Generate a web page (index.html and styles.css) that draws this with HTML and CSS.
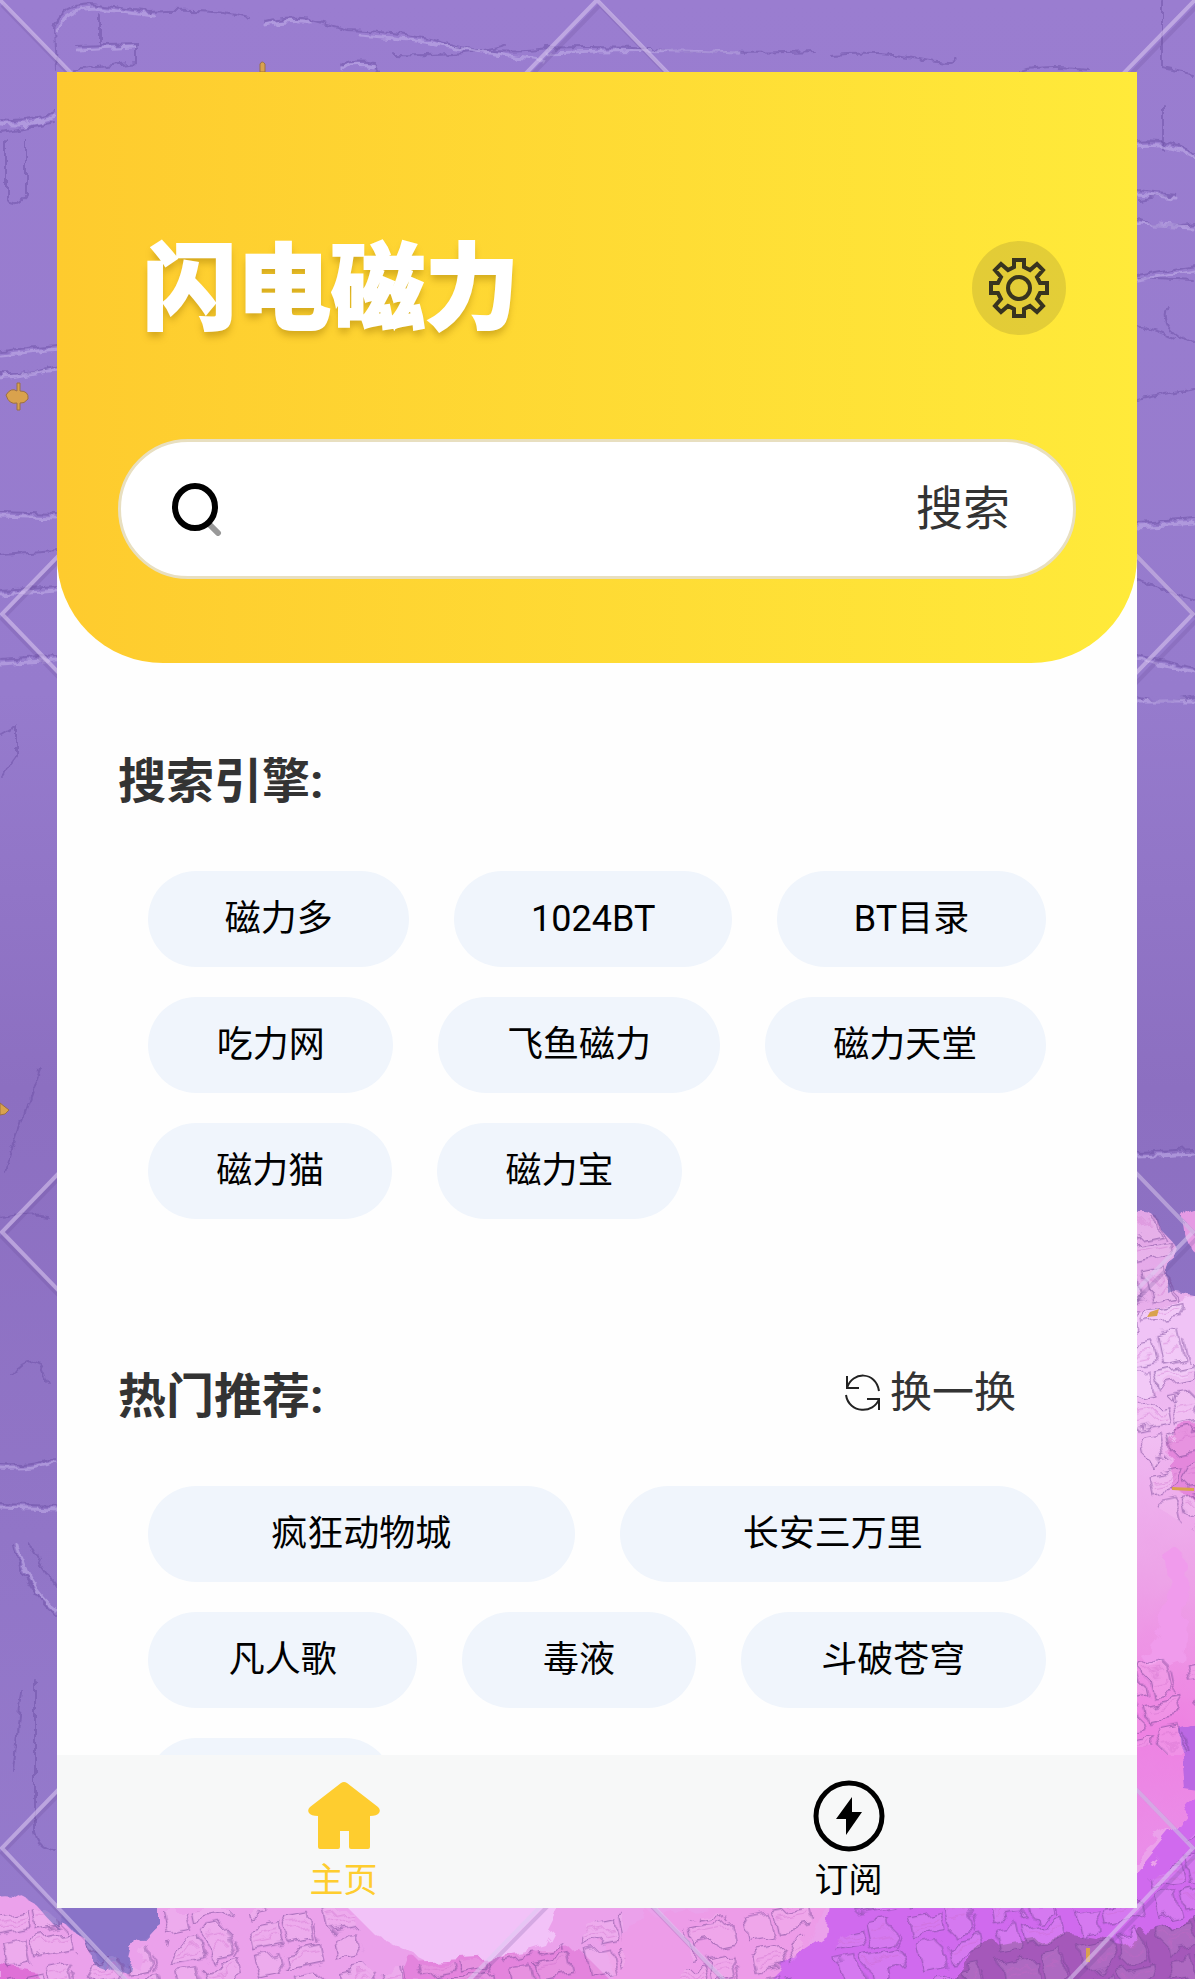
FILE: index.html
```html
<!DOCTYPE html>
<html lang="zh-CN">
<head>
    <meta charset="UTF-8">
    <meta name="viewport" content="width=device-width, initial-scale=1">
    <title>闪电磁力</title>
    <link rel="stylesheet" href="styles.css">
</head>
<body>
<svg class="wall" viewBox="0 0 1195 1979" preserveAspectRatio="none" aria-hidden="true">
    <defs>
        <linearGradient id="base" x1="0" y1="0" x2="0" y2="1">
            <stop offset="0" stop-color="#9a7dd0"/>
            <stop offset=".35" stop-color="#967bcd"/>
            <stop offset=".55" stop-color="#8c6fc1"/>
            <stop offset="1" stop-color="#967bcd"/>
        </linearGradient>
        <linearGradient id="side" x1="0" y1="0" x2="0" y2="1">
            <stop offset="0" stop-color="#e2a5e6"/>
            <stop offset=".25" stop-color="#efb9f2"/>
            <stop offset=".45" stop-color="#eda4e8"/>
            <stop offset=".65" stop-color="#ee82e2"/>
            <stop offset=".8" stop-color="#ea8de8"/>
            <stop offset="1" stop-color="#cf6bee"/>
        </linearGradient>
        <pattern id="dabs" width="58" height="46" patternUnits="userSpaceOnUse" patternTransform="rotate(-12) scale(1.4)">
            <path d="M2 4h24v14h-24zM30 1h16v20h-16zM48 8v16M4 24h15v18h-15zM23 26h28v12h-28z" fill="#fff" fill-opacity=".1" stroke="#6f3f91" stroke-opacity=".5" stroke-width="1"/>
            <path d="M4 9h20M4 13h20M25 30h24M32 6h12M32 12h12" stroke="#c866c4" stroke-opacity=".35" stroke-width="1"/>
        </pattern>
        <filter id="rough" x="-5%" y="-5%" width="110%" height="110%">
            <feTurbulence type="fractalNoise" baseFrequency=".035" numOctaves="3" seed="4" result="n"/>
            <feDisplacementMap in="SourceGraphic" in2="n" scale="26"/>
        </filter>
        <filter id="ripple" x="-5%" y="-5%" width="110%" height="110%">
            <feTurbulence type="fractalNoise" baseFrequency=".08" numOctaves="3" seed="9" result="n"/>
            <feDisplacementMap in="SourceGraphic" in2="n" scale="9" xChannelSelector="R" yChannelSelector="G"/>
        </filter>
    </defs>
    <rect width="1195" height="1979" fill="url(#base)"/>
    <!-- brush ridges -->
    <g fill="none" stroke-linecap="round" filter="url(#ripple)">
        <g stroke="#6b4fa5" stroke-opacity=".5" stroke-width="2">
            <path d="M56 72L54 28Q58 6 90 4L150 12Q210 8 250 18M266 22q20-6 46-2l36 10q60 2 100 14t100 5M395 55q70 2 110-10M545 48q60 -3 120 2t150 1M830 55q50-4 90 4t35 0M1162 0v68l30 6M1163 105v46M76 46l60-2v18l-62 8M100 15v30M340 66q10-7 35-3l4 8M1020 72q25-7 68-2"/>
            <path d="M0 120q28 4 56-8M0 132l56-10M0 351l57-6M0 374q30 2 57-8M0 512l57 2M0 555l57-4M0 590l57-4M0 660q25-2 57-4M6 140v60q10 8 20-4v-55M2 735l14-8v30l-14 20"/>
            <path d="M1137 142q30-4 58 12M1137 190l38 4-36 6M1137 220q25 10 58 3M1137 275l58-10M1137 278l58 3M1168 306q-10 22 24 38M1137 326q20 5 38 13M1137 523l58-4M1137 580l58 20M1137 655l58 13M1137 697q30 8 58 0M1137 400l58-12"/>
            <path d="M0 1465q35 2 57-8M0 1504l57 2M14 1545q8 40 42 70M28 1542l28 45M12 1375q15-20 29-10l7 18M35 1680v150q2 20 22 20M22 1690l-9 80M40 1070q-20 55-35 100M0 1218q30-6 50-2M1137 1152l58-3"/>
        </g>
        <g stroke="#c0abe7" stroke-opacity=".6" stroke-width="3">
            <path d="M58 31q4-21 35-23l60 8M266 25q22-6 44-2M360 35q50 4 80 10t102 15M548 53q95-5 190 0M78 50l56-3M340 69q10-7 35-3M0 124q28 4 56-8M0 355l57-6M0 378l57-8M0 516l57 2M0 594l57-4M0 664l57-4"/>
            <path d="M1137 146q30-4 58 12M1137 194l38 4M1137 224l58 3M1137 280l58-10M1137 527l58-4M1137 659l58 13M1137 701l58 0M0 1469q35 2 57-8M0 1508l57 2M18 1545q8 40 38 65M1137 1156l58-3"/>
        </g>
    </g>
    <!-- pink paint -->
    <g filter="url(#rough)">
        <path d="M1125 1220q30-18 36 10 20 18 9 45l-6 14 45 8v710H1060V1780h65z" fill="url(#side)"/>
        <path d="M1184 1225q6-20 30-12v50q-26-5-30-38" fill="#e59ae4"/>
        <path d="M1137 1310l70-20v70l-85 50z" fill="#f0c3f6"/>
        <path d="M1170 1440q12-20 40-15v80l-38-15z" fill="#e487dc"/>
        <path d="M1165 1560q28-25 20 30l-5 70-28 10-12-15q35-20 25-95" fill="#f09bec"/>
        <path d="M1180 1730l40-15v80l-35-5z" fill="#bb67e3"/>
        <path d="M-20 1898q28-12 55 6l22 24 20-10 15 44 38 14 8-34 20-22V1895H1100L1215 1790V2000H-20z" fill="#eba1eb"/>
        <path d="M335 1895h235l-25 50q-60 20-120 15l-50-25z" fill="#f2c2f8"/>
        <path d="M600 1940l70-30 155-10-30 80-180 10z" fill="#ed9ce8"/>
        <path d="M400 1985l10-25 170-10 40 40z" fill="#e484dd"/>
        <path d="M0 1965l35 6 10 20H0z" fill="#df70d7"/>
        <path d="M830 1895h290l90-110v205H760l35-35 30-20z" fill="#d06aee"/>
        <path d="M940 1990l40-42 80-15 60 10 80-22v75z" fill="#a558ba"/>
        <path d="M58 1898h100v24l-18 13-9 32h-30l-14-28-25-16z" fill="#8973c8"/>
    </g>
    <g filter="url(#rough)" fill="url(#dabs)">
        <path d="M1125 1225l40-8 10 78h40v250l-90-60z"/>
        <path d="M1125 1660h90v90h-90z"/>
        <path d="M-10 1910h55l50 40 45 20 20-60h190l20 60 190-20 60-50v100H-10z"/>
        <path d="M690 1920l130-20-40 100h-100z"/>
        <path d="M860 1905h260l100-90v190H820z"/>
    </g>
    <!-- gold flecks -->
    <g fill="#d9a24d" stroke="#9c7045" stroke-width="1">
        <path d="M260 72v-8q2-4 5 0v8zM6 395q5-8 11-4v-8h3v8q9 0 8 8-4 5-8 4v7h-3v-7q-8 2-11-8zM0 1103l9 7-4 4-5 1z"/>
        <path d="M1150 1312l9-3-2 7-10 1zM1172 1487l22 1v3l-22-1zM1086 1948h4v14h-4z" stroke="none"/>
    </g>
    <!-- diamond lattice -->
    <g fill="none" stroke-width="4">
        <path d="M2 5L600 619 1198 5M600 5L2 619 600 1237 1198 619zM2 1237L600 1853 1198 1237 600 619zM600 1237L2 1853 130 1985M600 1237L1198 1853 1070 1985M470 1985L600 1853 728 1985" stroke="#62478f" stroke-opacity=".2"/>
        <path d="M0 0L597 614 1195 0M597 0L2 614 597 1232 1193 614zM2 1232L597 1848 1193 1232 597 614zM597 1232L2 1848 127 1981M597 1232L1193 1848 1068 1981M468 1981L597 1848 725 1981" stroke="#dccbf1" stroke-opacity=".55"/>
    </g>
</svg>

<div class="app">
    <header class="top">
        <div class="bar">
            <h1 class="logo">闪电磁力</h1>
            <button class="setting" type="button" aria-label="设置">
                <svg viewBox="0 0 60 60" aria-hidden="true">
                    <path d="M25 2h10v7l6 3 7-6 6 6-6 7 3 6h7v10h-7l-3 6 6 7-6 6-7-6-6 3v7H25v-7l-6-3-7 6-6-6 6-7-3-6H2V25h7l3-6-6-7 6-6 7 6 6-3z"/>
                    <circle cx="30" cy="30" r="11"/>
                </svg>
            </button>
        </div>
        <form class="search">
            <svg class="glass" viewBox="0 0 52 54" aria-hidden="true">
                <path d="M38 42l9 9" stroke="#999" stroke-width="6" stroke-linecap="round"/>
                <ellipse cx="24" cy="25" rx="20" ry="21" fill="none" stroke="#000" stroke-width="6"/>
            </svg>
            <input class="word" type="text" aria-label="搜索内容">
            <button class="go" type="button">搜索</button>
        </form>
    </header>

    <main class="main">
        <section class="block">
            <div class="head">
                <h2>搜索引擎:</h2>
            </div>
            <ul class="tags">
                <li><button type="button">磁力多</button></li>
                <li><button type="button">1024BT</button></li>
                <li><button type="button">BT目录</button></li>
                <li><button type="button">吃力网</button></li>
                <li><button type="button">飞鱼磁力</button></li>
                <li><button type="button">磁力天堂</button></li>
                <li><button type="button">磁力猫</button></li>
                <li><button type="button">磁力宝</button></li>
            </ul>
        </section>
        <section class="block hot">
            <div class="head">
                <h2>热门推荐:</h2>
                <button class="change" type="button">
                    <svg viewBox="0 0 38 38" aria-hidden="true">
                        <path d="M3 2v12h12M3 14C8-3 32-3 35 17M2 21C5 40 30 40 35 25M23 25h12v11"/>
                    </svg>
                    换一换
                </button>
            </div>
            <ul class="tags">
                <li><button type="button">疯狂动物城</button></li>
                <li><button type="button">长安三万里</button></li>
                <li><button type="button">凡人歌</button></li>
                <li><button type="button">毒液</button></li>
                <li><button type="button">斗破苍穹</button></li>
                <li class="blank"></li>
            </ul>
        </section>
    </main>

    <nav class="tab">
        <a class="selected" href="#home">
            <svg viewBox="0 0 72 72" aria-hidden="true">
                <path d="M33 3q3-2 6 0l31 24q3 3 1 6-2 3-9 3v31q0 2-2 2H43q-2 0-2-2V51h-9v16q0 2-2 2H12q-2 0-2-2V36q-7 0-9-3-2-3 1-6z" fill="#fecd2f"/>
            </svg>
            主页
        </a>
        <a href="#feed">
            <svg viewBox="0 0 72 72" aria-hidden="true">
                <circle cx="36" cy="36" r="33" fill="none" stroke="#000" stroke-width="5"/>
                <path d="M39 17L23 39h10v16l16-23H39z"/>
            </svg>
            订阅
        </a>
    </nav>
</div>
</body>
</html>
```
FILE: styles.css
```css
*{
    margin: 0;
    padding: 0;
    box-sizing: border-box;
}
body{
    display: flex;
    height: 100vh;
    padding: 72px 58px 71px 57px;
    background: #967bcd;
    color: #000;
    font-family: Roboto, "Noto Sans CJK SC", sans-serif;
    overflow: hidden;
}
ul{
    list-style: none;
}
button, input{
    border: none;
    background: none;
    font: inherit;
    color: inherit;
}
button{
    cursor: pointer;
}
.wall{
    position: absolute;
    left: 0;
    top: 0;
    width: 100%;
    height: 100%;
    z-index: -1;
}
.app{
    flex: 1;
    display: flex;
    flex-direction: column;
    min-width: 0;
    background: #fefefe;
    overflow: hidden;
}

/* header */
.top{
    padding: 156px 61px 84px;
    border-radius: 0 0 106px 106px;
    background: linear-gradient(90deg, #fecb2e, #ffea3a);
}
.bar{
    display: flex;
    align-items: center;
    justify-content: space-between;
    height: 120px;
    margin-bottom: 91px;
    padding: 0 10px 0 25px;
}
.logo{
    padding-bottom: 14px;
    color: #fff;
    font-family: "Noto Sans CJK SC", sans-serif;
    font-size: 94px;
    font-weight: 900;
    line-height: 106px;
    -webkit-text-stroke: 2px #fff;
    text-shadow: 0 6px 7px rgba(150, 110, 0, .4);
}
.setting{
    display: flex;
    align-items: center;
    justify-content: center;
    width: 94px;
    height: 94px;
    border-radius: 50%;
    background: rgba(70, 60, 50, .15);
}
.setting svg{
    width: 60px;
    height: 60px;
    fill: none;
    stroke: #38341f;
    stroke-width: 4;
}
.search{
    display: flex;
    align-items: center;
    height: 140px;
    padding: 0 63px 0 50px;
    border: 3px solid #e8dfc0;
    border-radius: 70px;
    background: #fff;
}
.glass{
    width: 52px;
    height: 54px;
}
.word{
    flex: 1;
    min-width: 0;
    height: 80px;
    padding: 0 20px;
    font-size: 36px;
    outline: none;
}
.go{
    color: #333;
    font-size: 47px;
    line-height: 60px;
}

/* lists */
.main{
    flex: 1;
    min-height: 0;
    padding: 0 61px;
    overflow: hidden;
}
.block{
    padding-top: 86px;
}
.hot{
    padding-top: 145px;
}
.head{
    display: flex;
    align-items: flex-start;
    justify-content: space-between;
    height: 62px;
    margin-bottom: 60px;
    padding-right: 60px;
    color: #333;
}
.head h2{
    font-size: 48px;
    font-weight: 700;
    line-height: 66px;
}
.change{
    display: flex;
    align-items: center;
    gap: 8px;
    font-size: 42px;
    line-height: 58px;
}
.change svg{
    width: 38px;
    height: 38px;
    fill: none;
    stroke: #222;
    stroke-width: 2;
}
.tags{
    display: flex;
    flex-wrap: wrap;
    gap: 30px 45px;
    padding: 0 30px;
}
.tags::after{
    content: "";
    flex-grow: 1000;
}
.tags li{
    flex-grow: 1;
    height: 96px;
    border-radius: 48px;
    background: #f0f5fc;
}
.tags button{
    width: 100%;
    height: 96px;
    padding: 0 68px;
    font-size: 36px;
    line-height: 48px;
    white-space: nowrap;
}
.tags .blank{
    min-width: 245px;
}

/* bottom tabs */
.tab{
    display: flex;
    height: 153px;
    padding: 25px 36px 0 34px;
    background: #f7f8f8;
}
.tab a{
    flex: 1;
    display: flex;
    flex-direction: column;
    align-items: center;
    gap: 8px;
    color: #000;
    font-size: 34px;
    line-height: 40px;
    text-decoration: none;
}
.tab svg{
    width: 72px;
    height: 72px;
}
.tab .selected{
    color: #fecd2f;
}
```
